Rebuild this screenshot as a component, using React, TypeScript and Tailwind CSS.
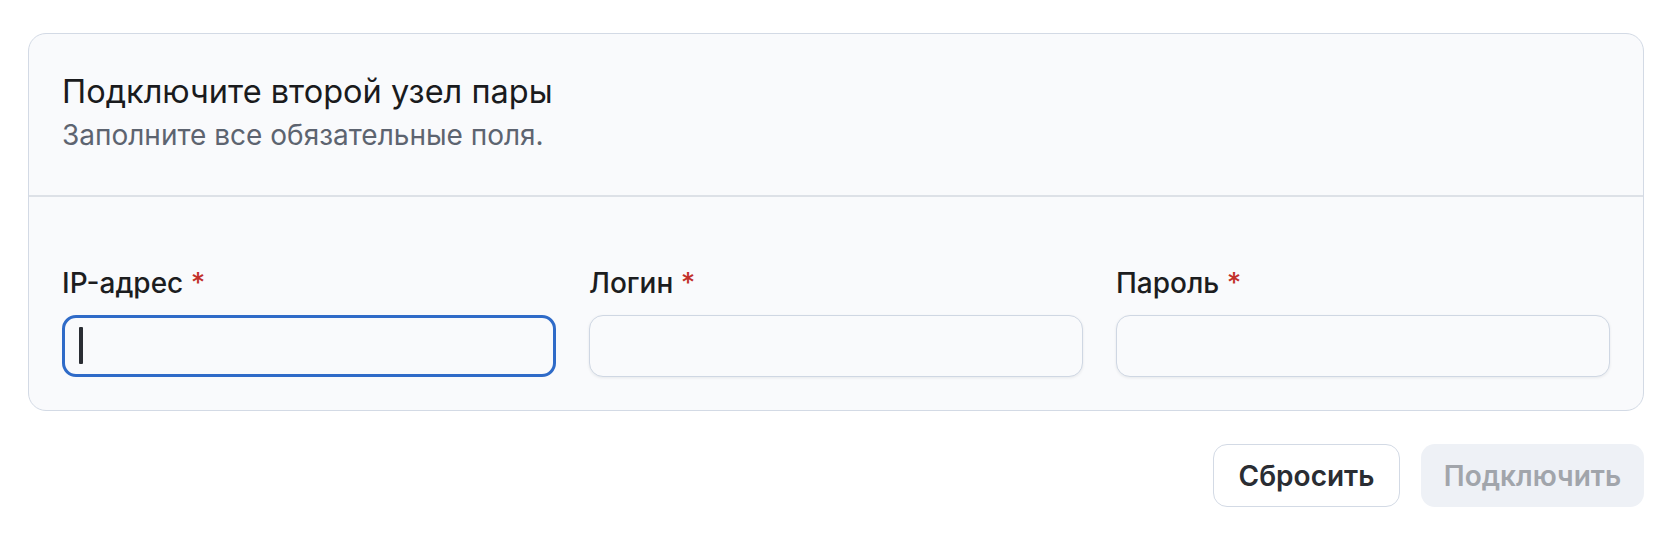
import React from "react";

const font = { fontFamily: "Inter, 'Noto Sans', sans-serif" };

function Field({ label, focused }: { label: string; focused?: boolean }) {
  return (
    <div className="flex flex-col">
      <label className="text-[28px] leading-[36px] font-medium text-[#1c1d1f]">
        {label} <span className="text-[#c2302a]">*</span>
      </label>
      <div className="relative mt-[14px]">
        <input
          type="text"
          className={
            "block h-[62px] w-full rounded-[14px] bg-[#f9fafc] px-[18px] text-[28px] outline-none caret-transparent " +
            (focused
              ? "border-[3px] border-[#2f6bc8]"
              : "border-[1.5px] border-[#cfd7e3] shadow-[0_1px_3px_rgba(16,24,40,0.08)]")
          }
        />
        {focused && (
          <span className="pointer-events-none absolute left-[17px] top-[12px] h-[37px] w-[4px] rounded-[1px] bg-[#2a2d33]" />
        )}
      </div>
    </div>
  );
}

export default function App() {
  return (
    <div className="min-h-screen bg-white pt-[33px] pl-[28px] pr-[26px]" style={font}>
      <div className="rounded-[18px] border-[1.5px] border-[#d3dae5] bg-[#f9fafc]">
        <div className="px-[33px] pt-[38px] pb-[42px]">
          <h2 className="text-[32.5px] leading-[40px] font-normal text-[#1a1b1d]">
            Подключите второй узел пары
          </h2>
          <p className="mt-[5px] text-[28px] leading-[36px] text-[#5d6470]">
            Заполните все обязательные поля.
          </p>
        </div>
        <div className="h-[2px] bg-[#dde1e7]" />
        <div className="grid grid-cols-3 gap-[33px] px-[33px] pt-[68px] pb-[33px]">
          <Field label="IP-адрес" focused />
          <Field label="Логин" />
          <Field label="Пароль" />
        </div>
      </div>
      <div className="mt-[33px] flex justify-end gap-[21px]">
        <button className="h-[63px] w-[187px] rounded-[14px] border-[1.5px] border-[#d3dae5] bg-white text-[28px] font-semibold text-[#2a2d33]">
          Сбросить
        </button>
        <button
          disabled
          className="h-[63px] w-[223px] rounded-[14px] bg-[#eef1f6] text-[28px] font-semibold text-[#a1a5ab]"
        >
          Подключить
        </button>
      </div>
    </div>
  );
}
